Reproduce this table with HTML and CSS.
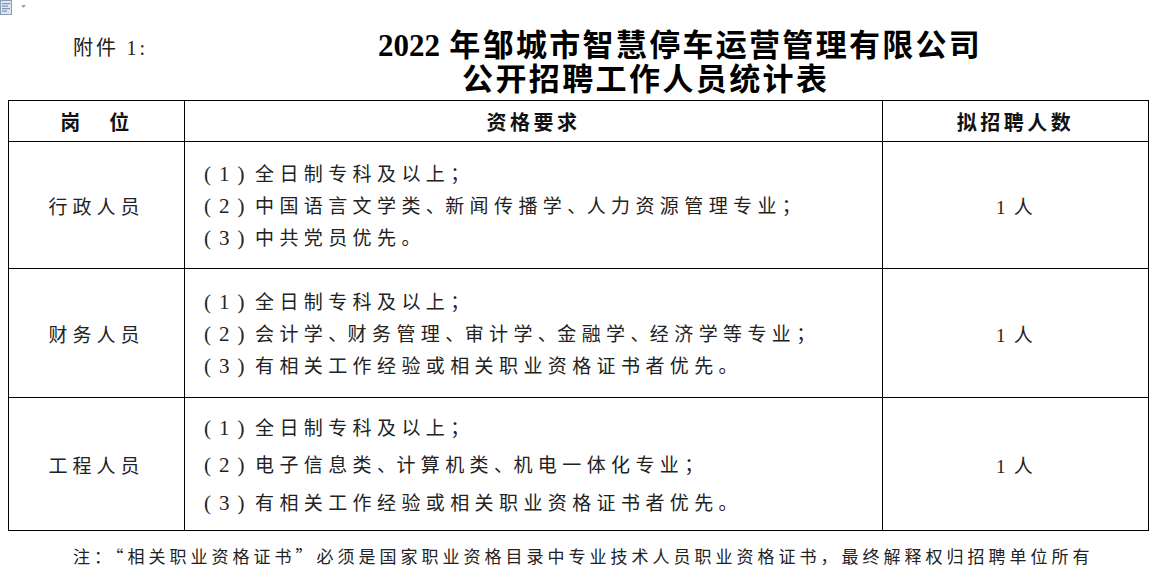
FILE: index.html
```html
<!DOCTYPE html>
<html lang="zh-CN">
<head>
<meta charset="utf-8">
<title>2022年邹城市智慧停车运营管理有限公司公开招聘工作人员统计表</title>
<link rel="stylesheet" href="styles.css">
</head>
<body>
<div class="doc-icon">
  <svg width="30" height="16" viewBox="0 0 30 16" aria-hidden="true">
    <rect x="0.5" y="0.5" width="11" height="14" fill="#dfe6f0" stroke="#8a9bb5"/>
    <rect x="2" y="3" width="8" height="1.2" fill="#7f93b3"/>
    <rect x="2" y="5.5" width="6" height="1.2" fill="#7f93b3"/>
    <rect x="2" y="8" width="8" height="1.2" fill="#7f93b3"/>
    <rect x="2" y="10.5" width="5" height="1.2" fill="#7f93b3"/>
    <path d="M21 5 L26 5 L23.5 8 Z" fill="#9aa5b5"/>
  </svg>
</div>
<header class="head">
  <div class="annex">附件 <span class="lat">1:</span></div>
  <div class="title">
    <div class="t1"><span class="lat">2022</span> 年邹城市智慧停车运营管理有限公司</div>
    <div class="t2">公开招聘工作人员统计表</div>
  </div>
</header>
<table class="tbl">
  <colgroup>
    <col class="c1"><col class="c2"><col class="c3">
  </colgroup>
  <thead>
    <tr class="hrow">
      <th><span class="gap">岗</span>位</th>
      <th>资格要求</th>
      <th>拟招聘人数</th>
    </tr>
  </thead>
  <tbody>
    <tr class="r1">
      <td class="post">行政人员</td>
      <td class="req">
        <div class="ln"><span class="num">(1)</span>全日制专科及以上；</div>
        <div class="ln"><span class="num">(2)</span>中国语言文学类<span class="p">、</span>新闻传播学<span class="p">、</span>人力资源管理专业；</div>
        <div class="ln"><span class="num">(3)</span>中共党员优先。</div>
      </td>
      <td class="cnt"><span class="lat">1</span> 人</td>
    </tr>
    <tr class="r2">
      <td class="post">财务人员</td>
      <td class="req">
        <div class="ln"><span class="num">(1)</span>全日制专科及以上；</div>
        <div class="ln"><span class="num">(2)</span>会计学<span class="p">、</span>财务管理<span class="p">、</span>审计学<span class="p">、</span>金融学<span class="p">、</span>经济学等专业；</div>
        <div class="ln"><span class="num">(3)</span>有相关工作经验或相关职业资格证书者优先。</div>
      </td>
      <td class="cnt"><span class="lat">1</span> 人</td>
    </tr>
    <tr class="r3">
      <td class="post">工程人员</td>
      <td class="req wide">
        <div class="ln"><span class="num">(1)</span>全日制专科及以上；</div>
        <div class="ln"><span class="num">(2)</span>电子信息类<span class="p">、</span>计算机类<span class="p">、</span>机电一体化专业；</div>
        <div class="ln"><span class="num">(3)</span>有相关工作经验或相关职业资格证书者优先。</div>
      </td>
      <td class="cnt"><span class="lat">1</span> 人</td>
    </tr>
  </tbody>
</table>
<p class="note">注：“相关职业资格证书”必须是国家职业资格目录中专业技术人员职业资格证书，最终解释权归招聘单位所有</p>
</body>
</html>
```

FILE: styles.css
```css
html, body {
  margin: 0;
  padding: 0;
  background: #ffffff;
}
body {
  width: 1154px;
  height: 571px;
  overflow: hidden;
  position: relative;
  color: #222222;
  font-family: "Noto Sans CJK SC", "Liberation Serif", serif;
}
.lat {
  font-family: "Liberation Serif", serif;
}
.doc-icon {
  position: absolute;
  left: 0;
  top: 0;
  line-height: 0;
}
.head {
  display: flex;
  height: 100px;
  box-sizing: border-box;
  padding-top: 26px;
  padding-left: 73px;
}
.annex {
  flex: none;
  width: 305px;
  height: 34px;
  font-size: 20px;
  line-height: 34px;
  margin-top: 4px;
  letter-spacing: 3px;
  color: #222;
}
.title {
  font-weight: bold;
  color: #000;
  font-size: 31px;
  line-height: 34px;
}
.t1, .t2 {
  height: 34px;
}
.t1 {
  letter-spacing: 2.3px;
}
.t1 .lat {
  letter-spacing: 0;
}
.t2 {
  padding-left: 84px;
  letter-spacing: 2.4px;
}
.tbl {
  margin-left: 8px;
  border-collapse: collapse;
  width: 1140px;
  table-layout: fixed;
}
.c1 { width: 176px; }
.c2 { width: 698px; }
.c3 { width: 266px; }
.tbl th, .tbl td {
  border: 1.5px solid #000;
  padding: 0;
}
.hrow { height: 41px; }
.tbl th {
  font-size: 20px;
  font-weight: bold;
  letter-spacing: 3.5px;
  color: #111;
  text-align: center;
  vertical-align: middle;
}
.gap { letter-spacing: 29px; }
.r1 { height: 127px; }
.r2 { height: 129px; }
.r3 { height: 133px; }
.post, .cnt {
  text-align: center;
  vertical-align: middle;
  font-size: 19px;
  letter-spacing: 5px;
}
.cnt { letter-spacing: 2px; }
.tbl td.req {
  padding-left: 16px;
  vertical-align: middle;
  font-size: 19px;
  line-height: 32px;
  letter-spacing: 5.4px;
  white-space: nowrap;
}
.ln {
  height: 32px;
}
.wide .ln {
  height: 37.5px;
  line-height: 37.5px;
}
.num {
  display: inline-block;
  box-sizing: border-box;
  width: 54px;
  padding-left: 3px;
  font-family: "Liberation Serif", serif;
  font-size: 21px;
  letter-spacing: 8px;
}
.p {
  letter-spacing: 0.4px;
}
.note {
  margin: 13px 0 0 73px;
  font-size: 17px;
  line-height: 24px;
  letter-spacing: 4px;
  white-space: nowrap;
  color: #222;
}
```
